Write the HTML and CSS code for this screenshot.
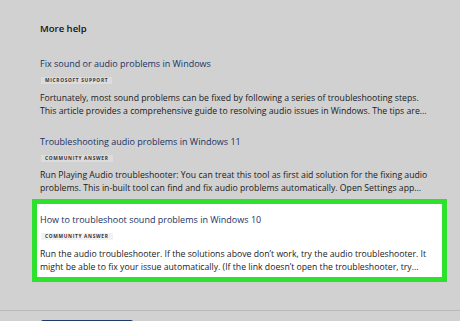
FILE: index.html
```html
<!DOCTYPE html>
<html lang="en">
<head>
    <meta charset="UTF-8">
    <meta name="viewport" content="width=device-width, initial-scale=1.0">
    <title>More help</title>
    <link rel="stylesheet" href="styles.css">
</head>
<body>
    <div class="help">
        <h2>More help</h2>

        <div class="item">
            <a class="item-title" href="#">Fix sound or audio problems in Windows</a>
            <span class="badge">Microsoft support</span>
            <p>Fortunately, most sound problems can be fixed by following a series of troubleshooting steps.<br>
            This article provides a comprehensive guide to resolving audio issues in Windows. The tips are...</p>
        </div>

        <div class="item">
            <a class="item-title" href="#">Troubleshooting audio problems in Windows 11</a>
            <span class="badge">Community answer</span>
            <p>Run Playing Audio troubleshooter: You can treat this tool as first aid solution for the fixing audio<br>
            problems. This in-built tool can find and fix audio problems automatically. Open Settings app...</p>
        </div>

        <div class="item highlight">
            <a class="item-title" href="#">How to troubleshoot sound problems in Windows 10</a>
            <span class="badge">Community answer</span>
            <p>Run the audio troubleshooter. If the solutions above don’t work, try the audio troubleshooter. It<br>
            might be able to fix your issue automatically. (If the link doesn’t open the troubleshooter, try...</p>
        </div>
    </div>

    <div class="footer">
        <button class="feedback" aria-label="Feedback"></button>
    </div>
</body>
</html>
```

FILE: styles.css
```css
body {
    margin: 0;
    background-color: #d1d1d1;
    font-family: "Open Sans", "Noto Sans", sans-serif;
    color: #1a1a1a;
    overflow: hidden;
}
.help {
    padding: 21.5px 0 0 40px;
}
.help h2 {
    margin: 0 0 22.5px;
    font-size: 9.5px;
    font-weight: 600;
    line-height: 13px;
    color: #111;
}
.item {
    display: flex;
    flex-direction: column;
    align-items: flex-start;
    width: 404px;
}
.item + .item {
    margin-top: 17px;
}
.item-title {
    font-size: 9px;
    line-height: 13px;
    color: #1a3263;
    text-decoration: none;
}
.badge {
    margin: 7px 0 0 1px;
    padding: 0 4px;
    font-size: 4.8px;
    font-weight: 700;
    line-height: 7px;
    letter-spacing: 0.7px;
    text-transform: uppercase;
    color: #333;
    background-color: rgba(255, 255, 255, 0.25);
}
.item p {
    margin: 7.5px 0 0;
    font-size: 8.7px;
    line-height: 13px;
    white-space: nowrap;
}
.item.highlight {
    margin: 3.5px 0 0 -8px;
    width: 402px;
    padding: 9.5px 0 3px 3px;
    background-color: #fff;
    border: 5px solid #2fe12f;
}
.highlight .badge {
    background-color: #f2f2f2;
}
.footer {
    border-top: 1px solid #b9b9b9;
    margin-top: 28px;
    padding: 9px 0 0 41px;
}
.feedback {
    display: block;
    width: 92px;
    height: 24px;
    border: none;
    border-radius: 2px;
    background-color: #1d3a6b;
}
```
